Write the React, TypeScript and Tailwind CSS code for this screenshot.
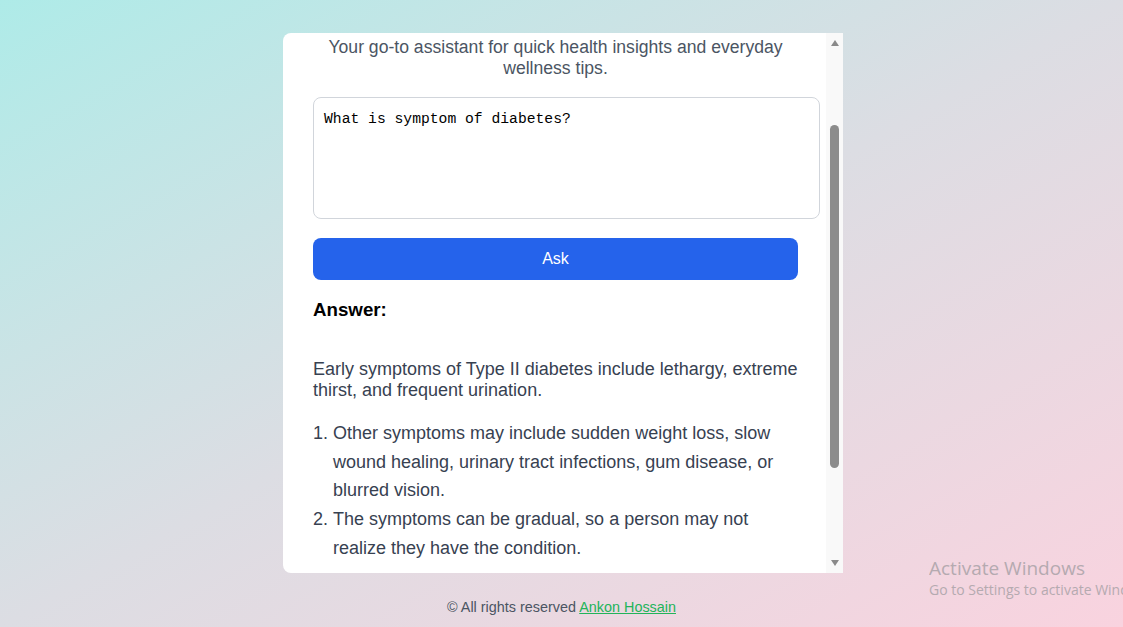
export default function App() {
  return (
    <div className="relative min-h-screen w-full bg-linear-to-br from-[#aeebe8] via-[#dcdde3] to-[#f9d3df] flex flex-col items-center pt-[33px] font-['Liberation_Sans',Arial,sans-serif]">
      {/* card with its own scrollbar */}
      <div className="ml-[3px] flex w-[560px] h-[540px] bg-white rounded-l-lg overflow-hidden">
        <div className="w-[543px] h-full overflow-hidden pl-[30px] pr-[28px] pt-[4px]">
          <p className="text-center text-[17.6px] leading-[21px] text-[#4b5563]">
            Your go-to assistant for quick health insights and everyday wellness tips.
          </p>

          <textarea
            className="mt-[18px] block w-[507px] h-[122px] resize-none rounded-lg border border-[#d1d5db] px-[10px] py-[12px] text-[14.7px] leading-[18px] text-black font-['Liberation_Mono',monospace] outline-none"
            defaultValue="What is symptom of diabetes?"
          />

          <button className="mt-[19px] w-full h-[42px] rounded-lg bg-[#2563eb] text-white text-[16px]">
            Ask
          </button>

          <h2 className="mt-[19px] text-[18.72px] leading-[22px] font-bold text-black">Answer:</h2>

          <div className="mt-[38px] text-[18px] text-[#374151]">
            <p className="leading-[21px]">
              Early symptoms of Type II diabetes include lethargy, extreme thirst, and frequent urination.
            </p>
            <ol className="mt-[18px] list-decimal pl-5 leading-[28.7px]">
              <li>
                Other symptoms may include sudden weight loss, slow wound healing, urinary tract infections, gum disease, or blurred vision.
              </li>
              <li>The symptoms can be gradual, so a person may not realize they have the condition.</li>
            </ol>
          </div>
        </div>

        <div className="w-[17px] h-full bg-[#f9f9f9] flex flex-col items-center">
          <div className="mt-[7px] w-0 h-0 border-l-[4.5px] border-r-[4.5px] border-b-[6px] border-l-transparent border-r-transparent border-b-[#8a8a8a]" />
          <div className="flex-1 w-full flex flex-col items-center">
            <div className="mt-[79px] w-[9px] h-[343px] rounded-full bg-[#8c8c8c]" />
          </div>
          <div className="mb-[7px] w-0 h-0 border-l-[4.5px] border-r-[4.5px] border-t-[6px] border-l-transparent border-r-transparent border-t-[#8a8a8a]" />
        </div>
      </div>

      <p className="mt-[26px] text-[14.4px] leading-[17px] text-[#4b5563]">
        © All rights reserved{" "}
        <a href="#" className="text-[#22b45a] underline">
          Ankon Hossain
        </a>
      </p>

      {/* windows watermark */}
      <div className="absolute left-[929px] top-[556px] whitespace-nowrap text-[#b5aab0] font-['Open_Sans',sans-serif] overflow-hidden w-[194px]">
        <div className="text-[19px] leading-[24px]">Activate Windows</div>
        <div className="text-[14px] leading-[20px]">Go to Settings to activate Windows.</div>
      </div>
    </div>
  );
}
